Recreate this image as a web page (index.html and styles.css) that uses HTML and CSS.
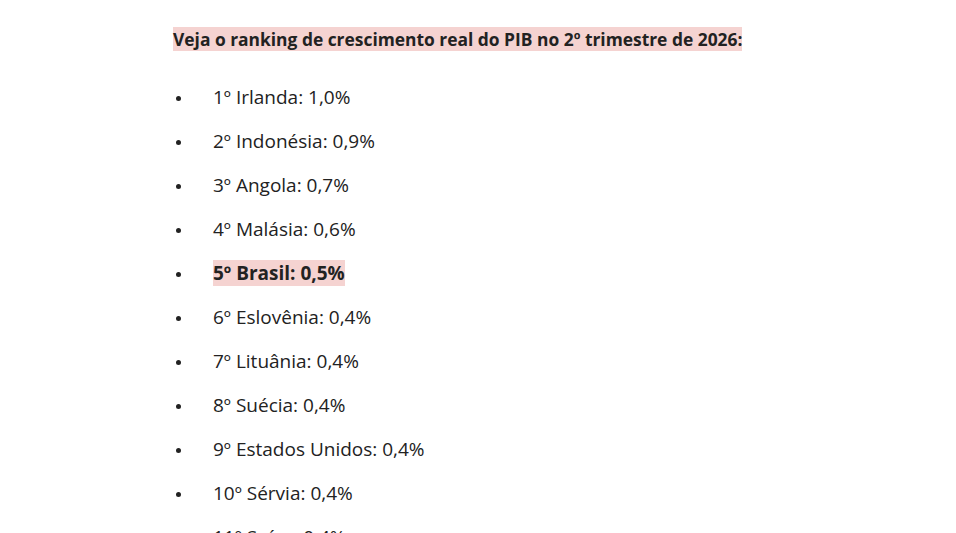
FILE: index.html
```html
<!DOCTYPE html>
<html lang="pt-BR">
<head>
<meta charset="utf-8">
<link rel="stylesheet" href="styles.css">
</head>
<body>
<article class="content">
  <p class="lead"><span class="mark">Veja o ranking de crescimento real do PIB no 2º trimestre de 2026:</span></p>
  <ul class="ranking">
    <li>1º Irlanda: 1,0%</li>
    <li>2º Indonésia: 0,9%</li>
    <li>3º Angola: 0,7%</li>
    <li>4º Malásia: 0,6%</li>
    <li><strong class="mark">5º Brasil: 0,5%</strong></li>
    <li>6º Eslovênia: 0,4%</li>
    <li>7º Lituânia: 0,4%</li>
    <li>8º Suécia: 0,4%</li>
    <li>9º Estados Unidos: 0,4%</li>
    <li>10º Sérvia: 0,4%</li>
    <li>11º Suíça: 0,4%</li>
  </ul>
</article>
</body>
</html>
```

FILE: styles.css
```css
html, body {
  margin: 0;
  padding: 0;
  background: #ffffff;
}
body {
  font-family: "Open Sans", "Liberation Sans", sans-serif;
  color: #222222;
  overflow: hidden;
  height: 533px;
}
.content {
  padding: 26px 0 0 173px;
}
.lead {
  margin: 0;
  font-size: 17.4px;
  line-height: 26px;
  font-weight: 700;
}
.mark {
  background: #f5d3d1;
}
.ranking {
  margin: 32px 0 0 0;
  padding: 0;
  list-style: none;
  font-size: 19px;
}
.ranking li {
  display: flex;
  align-items: center;
  line-height: 26px;
  margin-bottom: 18px;
}
.ranking li::before {
  content: "";
  flex: none;
  width: 5px;
  height: 5px;
  border-radius: 50%;
  background: #222222;
  margin: 2px 32px 0 3px;
}
.ranking strong {
  font-weight: 700;
}
```
